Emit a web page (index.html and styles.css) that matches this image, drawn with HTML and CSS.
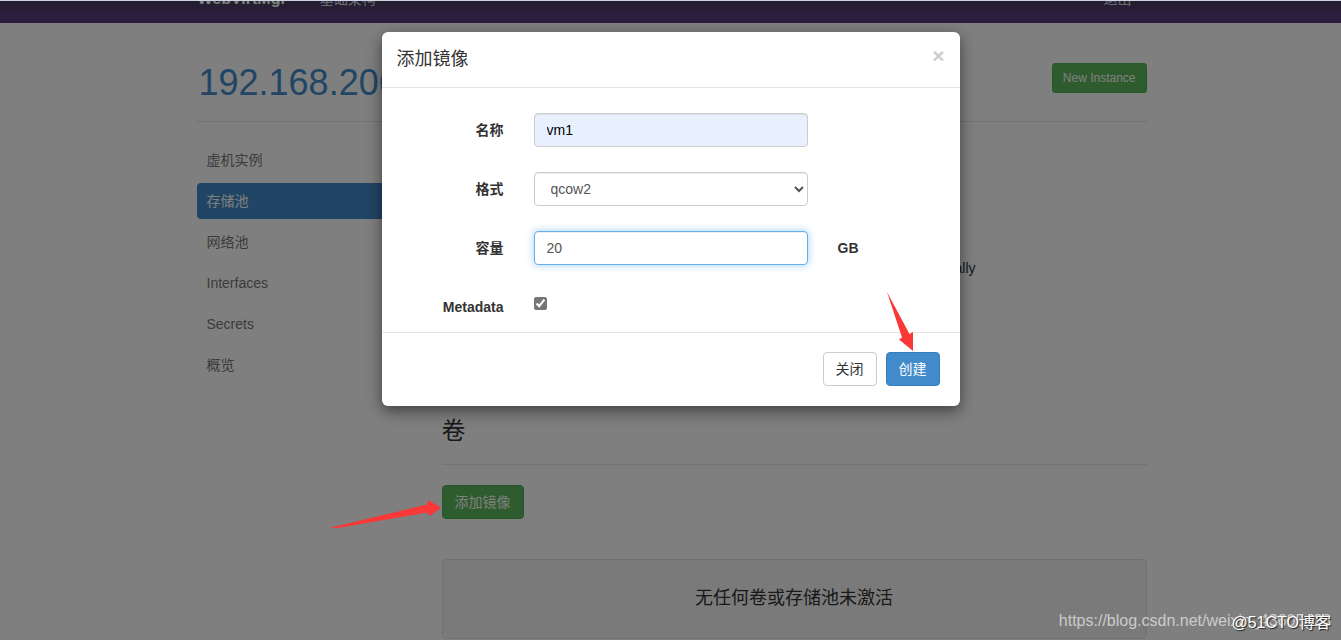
FILE: index.html
```html
<!DOCTYPE html>
<html lang="zh-CN">
<head>
<meta charset="utf-8">
<meta name="viewport" content="width=device-width, initial-scale=1">
<title>WebVirtMgr</title>
<link rel="stylesheet" href="styles.css">
</head>
<body>
<div class="page">
  <nav class="navbar">
    <div class="container navbar-inner">
      <a class="brand" href="#">WebVirtMgr</a>
      <a class="nav-link" href="#">基础架构</a>
      <a class="nav-link logout" href="#">退出</a>
    </div>
  </nav>
  <div class="container">
    <header class="page-header">
      <h1><a href="#">192.168.206</a></h1>
      <button class="btn btn-success btn-sm" type="button">New Instance</button>
    </header>
    <div class="columns">
      <ul class="sidebar">
        <li><a href="#">虚机实例</a></li>
        <li><a class="active" href="#">存储池</a></li>
        <li><a href="#">网络池</a></li>
        <li><a href="#">Interfaces</a></li>
        <li><a href="#">Secrets</a></li>
        <li><a href="#">概览</a></li>
      </ul>
      <main class="main">
        <div class="details"><p>ally</p></div>
        <h3>卷</h3>
        <button class="btn btn-success" type="button">添加镜像</button>
        <div class="well">无任何卷或存储池未激活</div>
      </main>
    </div>
  </div>
  <div class="backdrop"></div>
  <form class="modal" role="dialog" aria-labelledby="modal-title">
    <div class="modal-header">
      <h4 id="modal-title">添加镜像</h4>
      <button class="close" type="button" aria-label="Close">×</button>
    </div>
    <div class="modal-body">
      <div class="row">
        <label for="name">名称</label>
        <input class="control autofilled" id="name" type="text" value="vm1">
      </div>
      <div class="row">
        <label for="format">格式</label>
        <select class="control" id="format"><option>qcow2</option></select>
      </div>
      <div class="row">
        <label for="size">容量</label>
        <input class="control focused" id="size" type="text" value="20">
        <span class="unit">GB</span>
      </div>
      <div class="row">
        <label for="meta">Metadata</label>
        <input class="check" id="meta" type="checkbox" checked>
      </div>
    </div>
    <div class="modal-footer">
      <button class="btn btn-default" type="button">关闭</button>
      <button class="btn btn-primary" type="button">创建</button>
    </div>
    <svg class="arrow-create" width="30" height="62" viewBox="0 0 30 62" aria-hidden="true"><path fill="#fb3838" d="M2 1 L24.5 43 L28 41 L28 60 L14 48.500 L17 46.500Z"/></svg>
  </form>
  <svg class="arrow-add" width="114" height="32" viewBox="0 0 114 32" aria-hidden="true"><path fill="#fb3838" d="M0 29 L98 5.500 L99 1 L112 8.500 L101 17 L98 13.500 L9 29Z"/></svg>
  <div class="watermark csdn">https://blog.csdn.net/weixin_43605423</div>
  <div class="watermark cto">@51CTO博客</div>
</div>
</body>
</html>
```
FILE: styles.css
```css
* { box-sizing: border-box; }
body {
  margin: 0;
  border-top: 1px solid #cdd5e6;
  background: #fff;
  color: #333;
  font: 14px/20px "Liberation Sans", "Noto Sans CJK SC", sans-serif;
  overflow: hidden;
}
a { text-decoration: none; }
h1, h3, h4, p, ul { margin: 0; padding: 0; font-weight: 400; }
.page { position: relative; min-height: calc(100vh - 1px); overflow: hidden; }
.container { max-width: 952px; margin: 0 auto; padding-left: 2px; }

.navbar { height: 22px; overflow: hidden; background: linear-gradient(#443c54, #563d7c 50%, #563a7c); }
.navbar-inner { display: flex; align-items: flex-end; height: 22px; }
.navbar-inner a { line-height: 20px; padding: 14px 15px; color: #dcd6e8; flex-shrink: 0; }
.navbar-inner .brand { padding-left: 1px; padding-right: 18px; font-size: 16px; font-weight: 700; color: #fff; }
.navbar-inner .logout { margin-left: auto; }

.page-header {
  display: flex;
  align-items: center;
  justify-content: space-between;
  height: 99px;
  padding: 12px 0 0 2px;
  border-bottom: 1px solid #e6e6e6;
}
.page-header h1 { font-size: 36px; line-height: 40px; padding-top: 10px; }
.page-header h1 a { color: #428bca; }

.btn {
  height: 34px;
  padding: 6px 12px;
  border: 1px solid transparent;
  border-radius: 4px;
  font: inherit;
  line-height: 20px;
}
.btn-sm { height: 30px; padding: 4px 10px; font-size: 12px; border-radius: 3px; }
.btn-success { background: #5cb85c; border-color: #4cae4c; color: #fff; }
.btn-primary { background: #428bca; border-color: #357ebd; color: #fff; }
.btn-default { background: #fff; border-color: #ccc; color: #333; }

.columns { display: grid; grid-template-columns: 215px 1fr; gap: 30px; padding-top: 20px; }
.sidebar { list-style: none; display: grid; gap: 5px; align-content: start; }
.sidebar a { display: block; padding: 8px 10px; border-radius: 4px; color: #777; }
.sidebar a.active { background: #428bca; color: #fff; }
.main { min-width: 0; }
.details { height: 262px; padding: 116px 0 0 513px; }
.main h3 {
  padding: 12px 0 18px;
  margin-bottom: 20px;
  border-bottom: 1px solid #e6e6e6;
  font-size: 24px;
  line-height: 30px;
}
.well {
  margin-top: 40px;
  padding: 23px 20px 25px;
  border: 1px solid #e3e3e3;
  border-radius: 4px;
  background: #f5f5f5;
  font-size: 18px;
  line-height: 30px;
  text-align: center;
}

.backdrop { position: absolute; inset: 0; background: rgba(0, 0, 0, .5); }

.modal {
  position: absolute;
  top: 31px;
  left: 0;
  right: 0;
  width: 578px;
  margin: 0 auto;
  border-radius: 6px;
  background: #fff;
  box-shadow: 0 5px 15px rgba(0, 0, 0, .5);
}
.modal-header {
  display: flex;
  justify-content: space-between;
  padding: 14px 15px 15px;
  border-bottom: 1px solid #e5e5e5;
}
.modal-header h4 { font-size: 18px; line-height: 26px; }
.close {
  height: 20px;
  padding: 0;
  border: 0;
  background: none;
  color: #ccc;
  font: 700 21px/20px "Liberation Sans", sans-serif;
}
.modal-body { display: grid; gap: 25px; padding: 25px 20px 8px; }
.row { display: grid; grid-template-columns: 102px 274px 1fr; column-gap: 30px; min-height: 34px; }
.row label, .unit { padding: 7px 0; font-weight: 700; }
.row label { text-align: right; }
.control {
  width: 100%;
  height: 34px;
  padding: 6px 12px;
  border: 1px solid #ccc;
  border-radius: 4px;
  background-color: #fff;
  box-shadow: inset 0 1px 1px rgba(0, 0, 0, .075);
  color: #555;
  font: inherit;
}
.control.autofilled { background-color: #e8f0fe; color: #000; }
.control.focused {
  border-color: #66afe9;
  box-shadow: inset 0 1px 1px rgba(0, 0, 0, .075), 0 0 8px rgba(102, 175, 233, .6);
}
.check { width: 13px; height: 13px; margin: 7px 0 0; accent-color: #767676; }
.modal-footer {
  display: flex;
  justify-content: flex-end;
  gap: 9px;
  padding: 19px 20px 20px;
  border-top: 1px solid #e5e5e5;
}

.arrow-create { position: absolute; right: 45px; top: 259px; }
.arrow-add { position: absolute; left: calc(50% - 342px); top: 498px; }
.watermark { position: absolute; white-space: nowrap; }
.csdn { right: 10px; bottom: 9px; font-size: 16px; color: rgba(230, 230, 230, .75); }
.cto { right: 10px; bottom: 7px; color: #fff; font-size: 16px; text-shadow: 1px 1px 1px #222; }
```
